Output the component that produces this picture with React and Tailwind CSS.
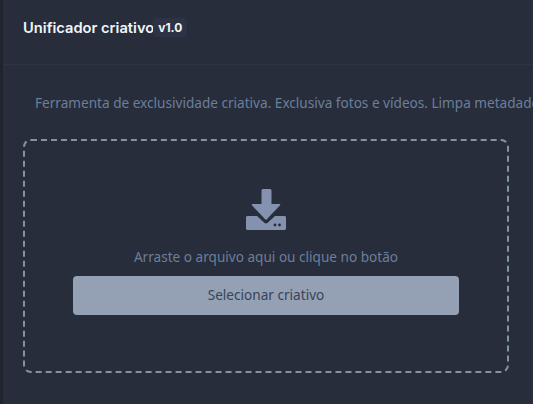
import React from 'react';

const App = () => {
  return (
    <div className="h-[404px] w-[533px] overflow-hidden bg-[#20242f] pl-[3px] font-['Noto_Sans',sans-serif]">
      <div className="h-full bg-[#282d3c]">
        {/* Header */}
        <div className="flex h-[65px] items-start border-b border-[#2e3446] pt-[18px] pl-5">
          <h1 className="font-['Inter',sans-serif] text-[14.7px] leading-5 font-semibold whitespace-nowrap text-[#f1f5f9]">
            Unificador criativo
          </h1>
          <span className="-ml-px rounded bg-[#2d3344] px-[5px] py-[2px] font-['Inter',sans-serif] text-xs leading-[15px] font-bold text-[#f1f5f9]">
            v1.0
          </span>
        </div>

        {/* Content */}
        <div className="pt-[28px] pl-5">
          <p className="pl-3 text-[13.6px] leading-5 whitespace-nowrap text-[#6b7f99]">
            Ferramenta de exclusividade criativa. Exclusiva fotos e vídeos. Limpa metadados
          </p>

          <div className="mt-[26px] flex h-[234px] w-[486px] flex-col items-center rounded-lg border-2 border-dashed border-[#8492a6] pt-[48px]">
            <svg width="40" height="41" viewBox="0 0 40 41" fill="#8492b0">
              <path d="M17 0h7a1.500 1.500 0 0 1 1.500 1.500V15h8c.7 0 1 .8.6 1.300L20.600 30.600c-.3.3-.9.3-1.200 0L5.900 16.300c-.4-.5-.1-1.300.6-1.300h9V1.500A1.500 1.500 0 0 1 17 0z" />
              <path d="M1.500 27h9.500l7.300 6.700c1 .9 2.400.9 3.400 0L29 27h9.500c.8 0 1.500.7 1.500 1.500v11c0 .8-.7 1.500-1.500 1.500h-37C.7 41 0 40.300 0 39.500v-11C0 27.700.7 27 1.500 27z" />
              <circle cx="29" cy="36" r="1.400" fill="#282d3c" />
              <circle cx="33.500" cy="36" r="1.400" fill="#282d3c" />
            </svg>
            <p className="mt-[17px] text-[13.6px] leading-5 text-[#6b7f99]">
              Arraste o arquivo aqui ou clique no botão
            </p>
            <button className="mt-[9px] h-[39px] w-[386px] rounded bg-[#94a0b3] text-[13.6px] text-[#3a4358]">
              Selecionar criativo
            </button>
          </div>
        </div>
      </div>
    </div>
  );
};

export default App;
